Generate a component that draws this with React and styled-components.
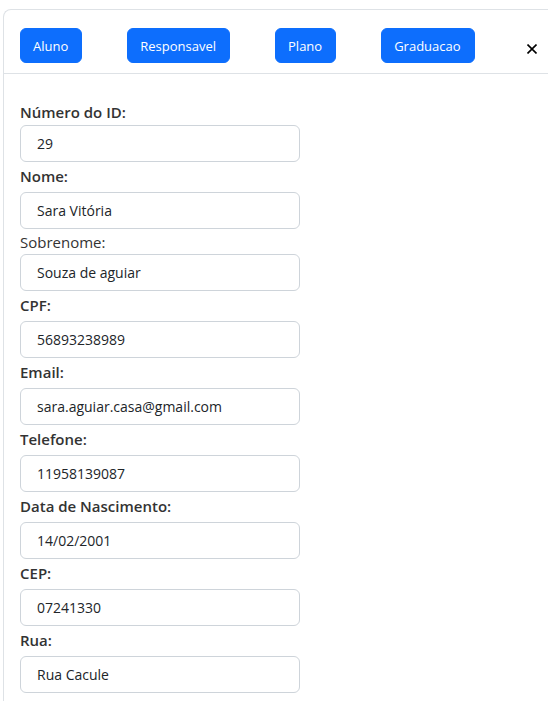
import React from 'react';
import styled, { createGlobalStyle } from 'styled-components';

const GlobalStyle = createGlobalStyle`
  html, body {
    margin: 0;
    padding: 0;
    background: #fff;
    overflow: hidden;
  }
  body {
    font-family: "Open Sans", "Noto Sans", sans-serif;
    color: #212529;
  }
`;

const Page = styled.div`
  padding: 9px 0 0 3px;
  height: 701px;
  box-sizing: border-box;
  overflow: hidden;
`;

const Modal = styled.div`
  width: 620px;
  border: 1px solid #dee2e6;
  border-right: none;
  border-radius: 8px 0 0 0;
  background: #fff;
`;

const Header = styled.div`
  display: flex;
  align-items: flex-start;
  height: 64px;
  box-sizing: border-box;
  padding: 18px 16px 0;
  border-bottom: 1px solid #dee2e6;
`;

const Tabs = styled.div`
  display: flex;
  gap: 45px;
  width: 504px;
`;

const TabButton = styled.button`
  height: 35px;
  padding: 0 13px 0 12px;
  border: 1px solid #0d6efd;
  border-radius: 6px;
  background: #0d6efd;
  color: #fff;
  font-family: inherit;
  font-size: 13px;
  cursor: pointer;
`;

const CloseButton = styled.button`
  display: flex;
  align-items: center;
  justify-content: center;
  width: 16px;
  height: 16px;
  margin-top: 13px;
  padding: 0;
  border: none;
  background: transparent;
  cursor: pointer;
`;

const Body = styled.div`
  padding: 26px 16px 0;
`;

const Field = styled.div`
  margin-top: ${(p) => p.$top}px;
`;

const Label = styled.label`
  display: block;
  font-size: 15px;
  line-height: 24px;
  font-weight: ${(p) => (p.$bold ? 600 : 400)};
  margin-bottom: ${(p) => p.$gap}px;
  color: #333;
`;

const Input = styled.input`
  display: block;
  box-sizing: border-box;
  width: 280px;
  height: 37px;
  padding: 0 16px;
  border: 1px solid #ced4da;
  border-radius: 6px;
  font-family: inherit;
  font-size: 14px;
  color: #212529;
  background: #fff;
  outline: none;
`;

const fields = [
  { label: 'Número do ID:', value: '29', bold: true, top: 0, gap: 1 },
  { label: 'Nome:', value: 'Sara Vitória', bold: true, top: 2, gap: 4 },
  { label: 'Sobrenome:', value: 'Souza de aguiar', bold: false, top: 1, gap: 0 },
  { label: 'CPF:', value: '56893238989', bold: true, top: 2, gap: 4 },
  { label: 'Email:', value: 'sara.aguiar.casa@gmail.com', bold: true, top: 2, gap: 4 },
  { label: 'Telefone:', value: '11958139087', bold: true, top: 2, gap: 4 },
  { label: 'Data de Nascimento:', value: '14/02/2001', bold: true, top: 2, gap: 4 },
  { label: 'CEP:', value: '07241330', bold: true, top: 2, gap: 4 },
  { label: 'Rua:', value: 'Rua Cacule', bold: true, top: 2, gap: 4 },
  { label: 'Número:', value: '', bold: true, top: 2, gap: 4 },
];

function App() {
  return (
    <>
      <GlobalStyle />
      <Page>
        <Modal>
          <Header>
            <Tabs>
              <TabButton>Aluno</TabButton>
              <TabButton>Responsavel</TabButton>
              <TabButton>Plano</TabButton>
              <TabButton>Graduacao</TabButton>
            </Tabs>
            <CloseButton aria-label="Fechar">
              <svg width="10" height="10" viewBox="0 0 10 10">
                <path d="M0.5 0.5 L9.5 9.5 M9.5 0.5 L0.5 9.5" stroke="#000" strokeWidth="1.6" />
              </svg>
            </CloseButton>
          </Header>
          <Body>
            {fields.map((f) => (
              <Field key={f.label} $top={f.top}>
                <Label $bold={f.bold} $gap={f.gap}>{f.label}</Label>
                <Input defaultValue={f.value} readOnly />
              </Field>
            ))}
          </Body>
        </Modal>
      </Page>
    </>
  );
}

export default App;
